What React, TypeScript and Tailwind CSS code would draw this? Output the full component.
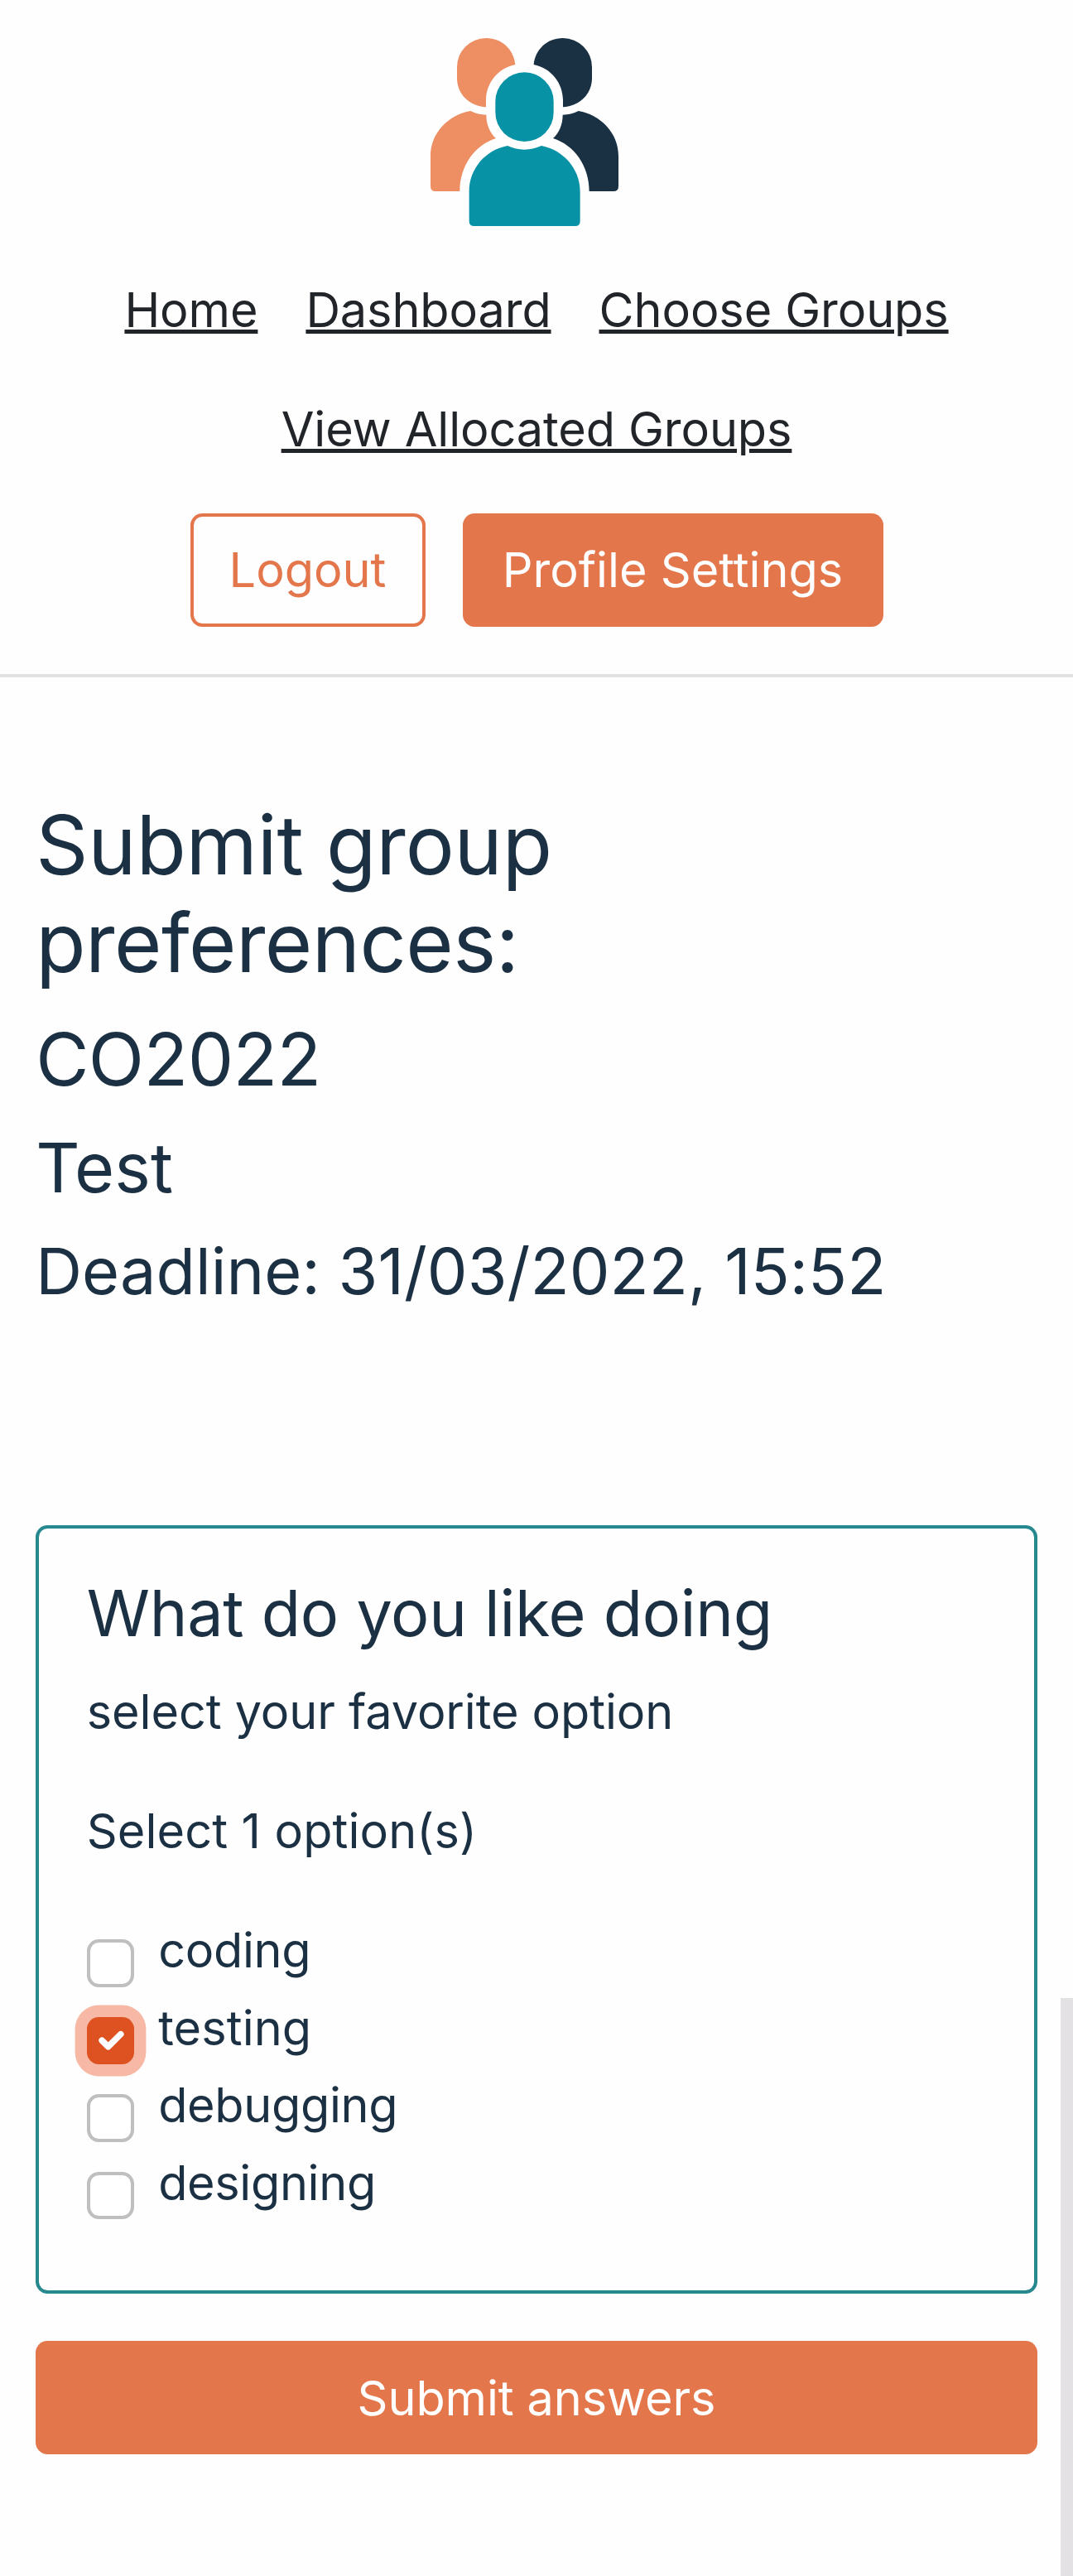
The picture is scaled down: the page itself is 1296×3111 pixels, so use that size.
import React from "react";

const navRows = [["Home", "Dashboard", "Choose Groups"], ["View Allocated Groups"]];

const options = [
  { label: "coding", checked: false, tracking: "tracking-[-0.3px]" },
  { label: "testing", checked: true, tracking: "tracking-[0.1px]" },
  { label: "debugging", checked: false, tracking: "tracking-[-0.35px]" },
  { label: "designing", checked: false, tracking: "tracking-[-0.35px]" },
];

function Logo() {
  const head =
    "M156 152A105 105 0 0 1 261 47C320 47 362 90 367 143C305 155 261 210 261 272V297C200 294 156 250 156 192Z";
  const body =
    "M78 602Q60 602 60 584V475C60 390 125 325 205 311Q232 325 262 325C262 360 275 390 297 410C220 435 166 510 166 602Z";
  return (
    <svg viewBox="60 47 681 681" className="mr-[29px] h-[227px] w-[227px]" aria-label="Groups logo">
      <g fill="#ee8e63">
        <path d={head} />
        <path d={body} />
      </g>
      <g fill="#1a3143" transform="translate(801 0) scale(-1 1)">
        <path d={head} />
        <path d={body} />
      </g>
      <g fill="#0892a6">
        <rect x="295" y="171" width="211" height="251" rx="105.5" />
        <path d="M218 728Q200 728 200 710V602C200 520 260 452 339 437Q400 465 462 437C540 452 602 520 602 602V710Q602 728 584 728Z" />
      </g>
    </svg>
  );
}

function Checkbox({ checked }: { checked: boolean }) {
  if (!checked) {
    return (
      <span className="mt-[30px] h-[57.6px] w-[57.6px] shrink-0 rounded-[14.4px] border-4 border-[#bfbfbf] bg-white" />
    );
  }
  return (
    <span className="mt-[30px] h-[57.6px] w-[57.6px] shrink-0 rounded-[14.4px] bg-[#dd5220] p-[3.6px] shadow-[0_0_0_14.4px_#f7b9a5]">
      <svg viewBox="0 0 20 20" className="h-full w-full" fill="none" stroke="#fff" strokeWidth="3" strokeLinecap="round" strokeLinejoin="round">
        <path d="M6 10l3 3l6-6" />
      </svg>
    </span>
  );
}

export default function App() {
  return (
    <div className="relative h-[3111px] w-[1296px] overflow-hidden bg-[#fefefe] font-['Inter',sans-serif] text-[57.6px] leading-[86.4px] text-[#1b3042] [font-optical-sizing:none]">
      <header className="flex h-[818px] flex-col items-center border-b-4 border-[#e1e1e1] pt-[46px]">
        <Logo />
        <nav className="mt-[58px] flex flex-col items-center gap-[57.6px] tracking-[-0.1px] text-[#212529]">
          {navRows.map((row) => (
            <div key={row[0]} className="flex gap-[58px]">
              {row.map((item) => (
                <a key={item} href="#" className="whitespace-nowrap underline decoration-[5px]">
                  {item}
                </a>
              ))}
            </div>
          ))}
        </nav>
        <div className="mt-[58.6px] flex gap-[45px]">
          <button className="flex h-[137px] w-[284px] items-center justify-center rounded-[14.4px] border-4 border-[#e4764b] text-[#e4764b]">
            Logout
          </button>
          <button className="flex h-[137px] w-[508px] items-center justify-center whitespace-nowrap rounded-[14.4px] bg-[#e4764b] text-white">
            Profile Settings
          </button>
        </div>
      </header>

      <main className="px-[43.2px] pt-[143px]">
        <div className="flex flex-col gap-[28.8px]">
          <h1 className="text-[98.64px] leading-[118.4px]">
            <span className="tracking-[-0.2px]">Submit group</span>
            <br />
            <span className="tracking-[-0.55px]">preferences:</span>
          </h1>
          <h2 className="text-[88px] leading-[105.6px] tracking-[-0.6px]">CO2022</h2>
          <h3 className="text-[82.66px] leading-[99.2px]">Test</h3>
          <h4 className="whitespace-nowrap text-[77.33px] leading-[92.8px] tracking-[0.07px]">
            Deadline: 31/03/2022, 15:52
          </h4>
        </div>

        <section className="mt-[260px] h-[928px] rounded-[14.4px] border-4 border-[#27898e] px-[57.6px] pt-[56.6px]">
          <h4 className="text-[77.33px] leading-[92.8px] tracking-[-0.28px]">What do you like doing</h4>
          <p className="mt-[28.8px] tracking-[-0.08px]">select your favorite option</p>
          <p className="mt-[57.6px] tracking-[0.12px]">Select 1 option(s)</p>
          <div className="mt-[57.6px]">
            {options.map((o) => (
              <label key={o.label} className="flex h-[93.6px] gap-[28.8px]">
                <Checkbox checked={o.checked} />
                <span className={o.tracking}>{o.label}</span>
              </label>
            ))}
          </div>
        </section>

        <button className="mt-[57.6px] flex h-[137px] w-full items-center justify-center rounded-[14.4px] bg-[#e4764b] tracking-[-0.1px] text-white">
          Submit answers
        </button>
      </main>

      <div className="absolute bottom-0 right-0 top-[2413px] w-[15px] bg-[#e3e1e4]" />
    </div>
  );
}
